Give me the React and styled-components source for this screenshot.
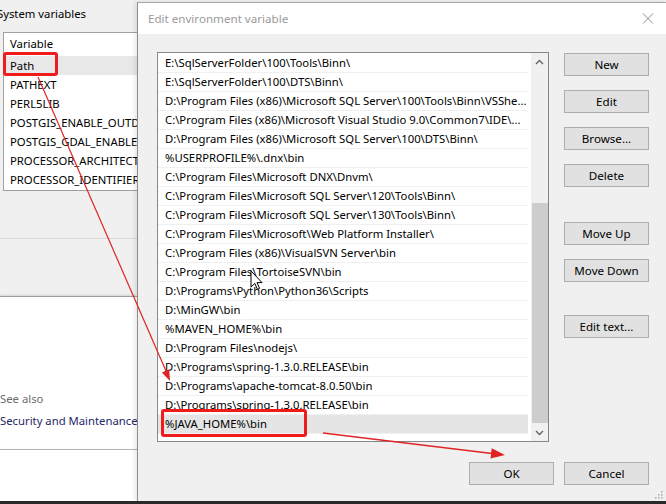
import React from 'react';
import styled, { createGlobalStyle } from 'styled-components';

const GlobalStyle = createGlobalStyle`
    html, body {
        margin: 0;
        padding: 0;
        background: #f0f0f0;
        overflow: hidden;
    }
    body {
        font-family: "Noto Sans", "Open Sans", sans-serif;
        font-size: 11.3px;
        color: #000;
    }
`;

const Screen = styled.div`
    position: relative;
    width: 666px;
    height: 501px;
    display: flex;
    overflow: hidden;
    background: #f0f0f0;
    border-bottom: 3px solid #2a2a2a;
`;

/* ---------- window behind the dialog ---------- */

const BackWindow = styled.div`
    width: 137px;
    flex-shrink: 0;
    display: flex;
    flex-direction: column;
    overflow: hidden;
`;

const SectionLabel = styled.div`
    height: 32px;
    line-height: 16px;
    padding-top: 6px;
    box-sizing: border-box;
    margin-left: -3px;
    white-space: nowrap;
`;

const VarList = styled.div`
    margin-left: 3px;
    width: 140px;
    height: 159px;
    box-sizing: border-box;
    background: #fff;
    border: 1px solid #a0a0a0;
    overflow: hidden;
`;

const VarHeader = styled.div`
    height: 23px;
    line-height: 22px;
    padding-left: 6px;
`;

const VarRow = styled.div`
    height: 19px;
    line-height: 19px;
    padding-left: 6px;
    white-space: nowrap;
    overflow: hidden;
    background: ${p => (p.$selected ? '#e8e8e8' : 'transparent')};
`;

const GrayBand = styled.div`
    height: 105px;
    display: flex;
    flex-direction: column;
    justify-content: flex-end;
`;

const BandLine = styled.div`
    height: 1px;
    background: #dadada;
    margin-bottom: 57px;
`;

const WhitePanel = styled.div`
    height: 153px;
    background: #fff;
    border-top: 1px solid #9c9c9c;
    box-shadow: 0 -1px 2px rgba(0, 0, 0, 0.12);
    display: flex;
    flex-direction: column;
    justify-content: flex-end;
    padding-bottom: 17px;
    box-sizing: border-box;
`;

const SeeAlso = styled.div`
    color: #6d6d6d;
    line-height: 22px;
    white-space: nowrap;
`;

const InfoLink = styled.div`
    color: #1f2866;
    line-height: 22px;
    white-space: nowrap;
`;

const LowerPanel = styled.div`
    flex: 1;
    background: #fff;
    border-top: 1px solid #b4b4b4;
`;

/* ---------- dialog ---------- */

const Dialog = styled.div`
    position: relative;
    flex: 1;
    margin-top: 2px;
    border-left: 1px solid #8e8e8e;
    border-top: 1px solid #a8a8a8;
    display: flex;
    flex-direction: column;
    background: #f0f0f0;
    box-shadow: -2px 0 4px rgba(0, 0, 0, 0.1);
`;

const TitleBar = styled.div`
    height: 31px;
    background: #fff;
    display: flex;
    align-items: center;
    justify-content: space-between;
    padding: 0 12px 0 10px;
`;

const Title = styled.span`
    color: #9a9a9a;
    font-size: 11.6px;
    margin-top: -1px;
`;

const CloseButton = styled.div`
    width: 12px;
    height: 12px;
    display: flex;
    align-items: center;
    justify-content: center;
`;

const Body = styled.div`
    flex: 1;
    display: flex;
    flex-direction: column;
    padding: 18px 17px 0 19px;
`;

const Main = styled.div`
    display: flex;
    gap: 15px;
`;

const ListBox = styled.div`
    width: 392px;
    height: 390px;
    box-sizing: border-box;
    background: #fff;
    border: 1px solid #828790;
    display: flex;
`;

const Rows = styled.div`
    flex: 1;
    padding: 1px 3px 0 0;
    overflow: hidden;
`;

const PathRow = styled.div`
    height: 19px;
    line-height: 18px;
    padding-left: 7px;
    box-sizing: border-box;
    border-bottom: 1px solid #f0f0f0;
    white-space: nowrap;
    overflow: hidden;
    background: ${p => (p.$selected ? '#e5e5e5' : 'transparent')};
`;

const ScrollBar = styled.div`
    width: 17px;
    background: #f0f0f0;
    display: flex;
    flex-direction: column;
`;

const ScrollArrow = styled.div`
    height: 17px;
    display: flex;
    align-items: center;
    justify-content: center;
`;

const Track = styled.div`
    flex: 1;
    display: flex;
    flex-direction: column;
`;

const Thumb = styled.div`
    margin: 133px 0 0 1px;
    height: 220px;
    background: #cdcdcd;
`;

const SideButtons = styled.div`
    display: flex;
    flex-direction: column;
    padding-top: 1px;
`;

const Button = styled.div`
    width: 85px;
    height: 23px;
    box-sizing: border-box;
    margin-top: ${p => p.$top || 0}px;
    background: #e1e1e1;
    border: 1px solid #adadad;
    display: flex;
    align-items: center;
    justify-content: center;
    font-size: 11.6px;
`;

const Footer = styled.div`
    display: flex;
    justify-content: flex-end;
    gap: 10px;
    margin-top: 20px;
`;

const Grip = styled.svg`
    position: absolute;
    right: 3px;
    bottom: 2px;
`;

const Annotations = styled.svg`
    position: absolute;
    left: 0;
    top: 0;
    pointer-events: none;
`;

const variables = [
    'Path',
    'PATHEXT',
    'PERL5LIB',
    'POSTGIS_ENABLE_OUTDB_RASTERS',
    'POSTGIS_GDAL_ENABLED_DRIVERS',
    'PROCESSOR_ARCHITECTURE',
    'PROCESSOR_IDENTIFIER',
];

const paths = [
    'E:\\SqlServerFolder\\100\\Tools\\Binn\\',
    'E:\\SqlServerFolder\\100\\DTS\\Binn\\',
    'D:\\Program Files (x86)\\Microsoft SQL Server\\100\\Tools\\Binn\\VSShe...',
    'C:\\Program Files (x86)\\Microsoft Visual Studio 9.0\\Common7\\IDE\\...',
    'D:\\Program Files (x86)\\Microsoft SQL Server\\100\\DTS\\Binn\\',
    '%USERPROFILE%\\.dnx\\bin',
    'C:\\Program Files\\Microsoft DNX\\Dnvm\\',
    'C:\\Program Files\\Microsoft SQL Server\\120\\Tools\\Binn\\',
    'C:\\Program Files\\Microsoft SQL Server\\130\\Tools\\Binn\\',
    'C:\\Program Files\\Microsoft\\Web Platform Installer\\',
    'C:\\Program Files (x86)\\VisualSVN Server\\bin',
    'C:\\Program Files\\TortoiseSVN\\bin',
    'D:\\Programs\\Python\\Python36\\Scripts',
    'D:\\MinGW\\bin',
    '%MAVEN_HOME%\\bin',
    'D:\\Program Files\\nodejs\\',
    'D:\\Programs\\spring-1.3.0.RELEASE\\bin',
    'D:\\Programs\\apache-tomcat-8.0.50\\bin',
    'D:\\Programs\\spring-1.3.0.RELEASE\\bin',
    '%JAVA_HOME%\\bin',
];

const sideButtons = [
    { label: 'New', top: 0 },
    { label: 'Edit', top: 14 },
    { label: 'Browse...', top: 14 },
    { label: 'Delete', top: 14 },
    { label: 'Move Up', top: 35 },
    { label: 'Move Down', top: 14 },
    { label: 'Edit text...', top: 33 },
];

const Chevron = ({ up }) => (
    <svg width="9" height="6" viewBox="0 0 9 6">
        <polyline
            points={up ? '1,5 4.5,1.5 8,5' : '1,1 4.5,4.5 8,1'}
            fill="none"
            stroke="#606060"
            strokeWidth="1.3"
        />
    </svg>
);

const App = () => {
    return (
        <Screen>
            <GlobalStyle />
            <BackWindow>
                <SectionLabel>System variables</SectionLabel>
                <VarList>
                    <VarHeader>Variable</VarHeader>
                    {variables.map(v => (
                        <VarRow key={v} $selected={v === 'Path'}>{v}</VarRow>
                    ))}
                </VarList>
                <GrayBand>
                    <BandLine />
                </GrayBand>
                <WhitePanel>
                    <SeeAlso>See also</SeeAlso>
                    <InfoLink>Security and Maintenance</InfoLink>
                </WhitePanel>
                <LowerPanel />
            </BackWindow>

            <Dialog>
                <TitleBar>
                    <Title>Edit environment variable</Title>
                    <CloseButton>
                        <svg width="12" height="11" viewBox="0 0 12 11">
                            <path d="M1 0.5 L11 10.5 M11 0.5 L1 10.5" stroke="#8a8a8a" strokeWidth="1" />
                        </svg>
                    </CloseButton>
                </TitleBar>
                <Body>
                    <Main>
                        <ListBox>
                            <Rows>
                                {paths.map((p, i) => (
                                    <PathRow key={i} $selected={i === paths.length - 1}>{p}</PathRow>
                                ))}
                            </Rows>
                            <ScrollBar>
                                <ScrollArrow><Chevron up /></ScrollArrow>
                                <Track><Thumb /></Track>
                                <ScrollArrow><Chevron /></ScrollArrow>
                            </ScrollBar>
                        </ListBox>
                        <SideButtons>
                            {sideButtons.map(b => (
                                <Button key={b.label} $top={b.top}>{b.label}</Button>
                            ))}
                        </SideButtons>
                    </Main>
                    <Footer>
                        <Button>OK</Button>
                        <Button>Cancel</Button>
                    </Footer>
                </Body>
                <Grip width="10" height="10" viewBox="0 0 10 10">
                    {[[8, 2], [8, 5], [8, 8], [5, 5], [5, 8], [2, 8]].map(([x, y]) => (
                        <rect key={x + '-' + y} x={x} y={y} width="1.5" height="1.5" fill="#a8a8a8" />
                    ))}
                </Grip>
            </Dialog>

            <Annotations width="666" height="504" viewBox="0 0 666 504">
                <rect x="4.5" y="53.5" width="52" height="21" rx="1.5" fill="none" stroke="#ee1c1c" strokeWidth="3" />
                <rect x="162.5" y="410.5" width="143" height="25" rx="1.5" fill="none" stroke="#ee1c1c" strokeWidth="3" />
                <line x1="38" y1="77" x2="166" y2="371" stroke="#e02424" strokeWidth="1.2" />
                <polygon points="170,381 169.2,369.3 161.9,372.5" fill="#e02424" />
                <line x1="323" y1="433" x2="492" y2="453.5" stroke="#e02424" strokeWidth="1.5" />
                <polygon points="505,455 490.5,458.5 491.7,448.2" fill="#e02424" />
                <path
                    d="M251 271 L251 287 L254.8 283.4 L257.4 289.3 L259.6 288.4 L257 282.6 L262 282.6 Z"
                    fill="#fff"
                    stroke="#000"
                    strokeWidth="1"
                    strokeLinejoin="round"
                />
            </Annotations>
        </Screen>
    );
};

export default App;
